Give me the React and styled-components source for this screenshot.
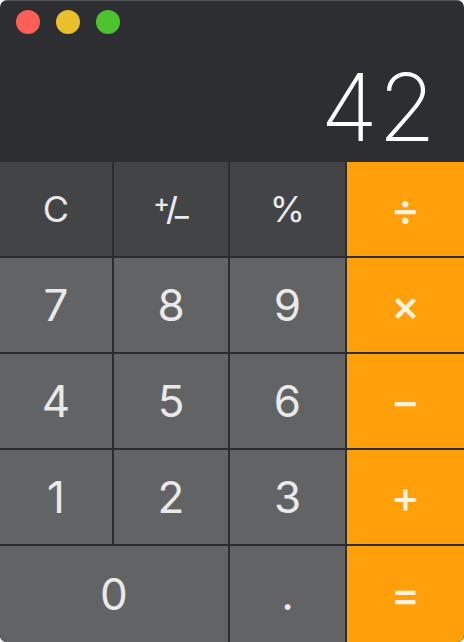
import React from "react";
import styled, { createGlobalStyle } from "styled-components";

const GlobalStyle = createGlobalStyle`
  html, body {
    margin: 0;
    padding: 0;
    background: #ffffff;
  }
`;

const Window = styled.div`
  width: 464px;
  height: 642px;
  display: flex;
  flex-direction: column;
  background-color: #2d2e32;
  border-radius: 7px;
  overflow: hidden;
  box-shadow: inset 0 1px 0 rgba(255, 255, 255, 0.18);
  font-family: "Inter", "Liberation Sans", sans-serif;
  user-select: none;
`;

const TitleBar = styled.div`
  height: 43px;
  display: flex;
  align-items: center;
  gap: 16px;
  padding-left: 16px;
  flex-shrink: 0;
`;

const Light = styled.span`
  width: 24px;
  height: 24px;
  border-radius: 50%;
  background-color: ${(p) => p.color};
`;

const Display = styled.div`
  height: 119px;
  display: flex;
  justify-content: flex-end;
  align-items: flex-end;
  padding-right: 28px;
  box-sizing: border-box;
  flex-shrink: 0;
`;

const Result = styled.div`
  color: #ffffff;
  font-size: 94px;
  font-weight: 200;
  line-height: 1;
  margin-bottom: 8px;
`;

const Keypad = styled.div`
  flex: 1;
  display: grid;
  grid-template-columns: 112px 114px 115px 117px;
  grid-template-rows: 94px 94px 94px 94px 96px;
  gap: 2px;
  background-color: #2c2d30;
`;

const keyColors = {
  func: "#434446",
  digit: "#626365",
  op: "#ff9f0a",
};

const Key = styled.button`
  border: none;
  margin: 0;
  padding: 0;
  background-color: ${(p) => keyColors[p.kind]};
  color: ${(p) => (p.kind === "op" ? "#fff2df" : "#e9e9ea")};
  font-family: inherit;
  font-size: ${(p) => (p.kind === "func" ? "36px" : "44px")};
  font-weight: ${(p) => (p.kind === "op" ? 500 : 400)};
  grid-column: ${(p) => (p.wide ? "span 2" : "auto")};
  display: flex;
  align-items: center;
  justify-content: center;
  line-height: 1;
  cursor: pointer;
`;

const Sign = styled.span`
  display: inline-flex;
  height: 28px;
  font-weight: 500;
`;

const SignPart = styled.span`
  font-size: ${(p) => p.size}px;
  line-height: ${(p) => p.lh}px;
  align-self: ${(p) => p.align};
  margin-left: ${(p) => p.shift || 0}px;
`;

const PlusMinus = () => (
  <Sign>
    <SignPart size={25} lh={17} align="flex-start">+</SignPart>
    <SignPart size={32} lh={28} align="center" shift={-4}>/</SignPart>
    <SignPart size={28} lh={14} align="flex-end" shift={-3}>–</SignPart>
  </Sign>
);

const keys = [
  ["C", "func"],
  ["pm", "func"],
  ["%", "func"],
  ["÷", "op"],
  ["7", "digit"],
  ["8", "digit"],
  ["9", "digit"],
  ["×", "op"],
  ["4", "digit"],
  ["5", "digit"],
  ["6", "digit"],
  ["−", "op"],
  ["1", "digit"],
  ["2", "digit"],
  ["3", "digit"],
  ["+", "op"],
  ["0", "digit", true],
  [".", "digit"],
  ["=", "op"],
];

export default function App() {
  return (
    <>
      <GlobalStyle />
      <Window>
        <TitleBar>
          <Light color="#fe5f57" />
          <Light color="#e9bf2d" />
          <Light color="#4fc22f" />
        </TitleBar>
        <Display>
          <Result>42</Result>
        </Display>
        <Keypad>
          {keys.map(([label, kind, wide]) => (
            <Key key={label} kind={kind} wide={wide}>
              {label === "pm" ? <PlusMinus /> : label}
            </Key>
          ))}
        </Keypad>
      </Window>
    </>
  );
}
